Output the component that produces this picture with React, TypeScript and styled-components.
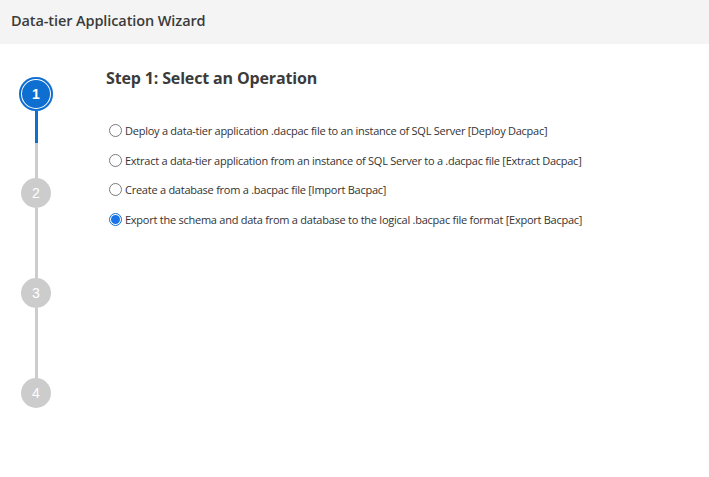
import React, { useState } from "react";
import styled, { createGlobalStyle } from "styled-components";

const Global = createGlobalStyle`
  html, body { margin: 0; padding: 0; background: #ffffff; }
  body { font-family: "Open Sans", "Noto Sans", sans-serif; color: #333333; }
  * { box-sizing: border-box; }
`;

const Page = styled.div`
  width: 709px;
  height: 477px;
  display: flex;
  flex-direction: column;
  background: #ffffff;
`;

const Header = styled.div`
  height: 44px;
  flex: none;
  background: #f4f4f4;
  display: flex;
  align-items: center;
  padding-left: 11px;
  padding-bottom: 4px;
`;

const Title = styled.div`
  font-size: 14.5px;
  font-weight: 600;
  color: #3b3b3b;
  letter-spacing: -0.1px;
`;

const Body = styled.div`
  display: flex;
  flex: 1;
`;

const Rail = styled.div`
  width: 72px;
  flex: none;
  display: flex;
  flex-direction: column;
  align-items: center;
  padding-top: 33px;
`;

const StepCircle = styled.div<{ $active?: boolean }>`
  width: ${(p) => (p.$active ? 34 : 30)}px;
  height: ${(p) => (p.$active ? 34 : 30)}px;
  flex: none;
  border-radius: 50%;
  background: ${(p) => (p.$active ? "#0f6fd1" : "#cccccc")};
  box-shadow: ${(p) => (p.$active ? "inset 0 0 0 2px #0f6fd1, inset 0 0 0 3px #ffffff" : "none")};
  color: #ffffff;
  font-family: "Liberation Sans", Arial, sans-serif;
  font-size: 14px;
  font-weight: ${(p) => (p.$active ? 700 : 400)};
  display: flex;
  align-items: center;
  justify-content: center;
`;

const Connector = styled.div<{ $length: number; $progress?: number }>`
  width: 3px;
  height: ${(p) => p.$length}px;
  flex: none;
  background: ${(p) =>
    p.$progress
      ? `linear-gradient(#0f6fd1 0, #0f6fd1 ${p.$progress}px, #cccccc ${p.$progress}px)`
      : "#cccccc"};
`;

const Content = styled.div`
  flex: 1;
  padding-left: 34px;
  padding-top: 23px;
`;

const StepTitle = styled.h2`
  margin: 0;
  font-size: 16px;
  font-weight: 700;
  color: #3b3b3b;
  letter-spacing: -0.15px;
  line-height: 22px;
`;

const Options = styled.div`
  display: flex;
  flex-direction: column;
  gap: 10.7px;
  margin-top: 32px;
`;

const Option = styled.label`
  display: flex;
  align-items: center;
  gap: 3px;
  height: 19px;
  font-size: 11px;
  color: #333333;
  cursor: pointer;
  letter-spacing: -0.25px;
`;

const Radio = styled.span<{ $checked?: boolean }>`
  width: 13px;
  height: 13px;
  flex: none;
  margin-left: 3px;
  border-radius: 50%;
  border: 1px solid ${(p) => (p.$checked ? "#0f6fd1" : "#7a7a7a")};
  background: #ffffff;
  display: flex;
  align-items: center;
  justify-content: center;
  &::after {
    content: "";
    width: 9px;
    height: 9px;
    border-radius: 50%;
    background: ${(p) => (p.$checked ? "#1a73e8" : "transparent")};
  }
`;

const options = [
  "Deploy a data-tier application .dacpac file to an instance of SQL Server [Deploy Dacpac]",
  "Extract a data-tier application from an instance of SQL Server to a .dacpac file [Extract Dacpac]",
  "Create a database from a .bacpac file [Import Bacpac]",
  "Export the schema and data from a database to the logical .bacpac file format [Export Bacpac]",
];

export default function App() {
  const [selected, setSelected] = useState(3);
  return (
    <Page>
      <Global />
      <Header>
        <Title>Data-tier Application Wizard</Title>
      </Header>
      <Body>
        <Rail>
          <StepCircle $active>1</StepCircle>
          <Connector $length={67} $progress={32} />
          <StepCircle>2</StepCircle>
          <Connector $length={70} />
          <StepCircle>3</StepCircle>
          <Connector $length={70} />
          <StepCircle>4</StepCircle>
        </Rail>
        <Content>
          <StepTitle>Step 1: Select an Operation</StepTitle>
          <Options>
            {options.map((o, i) => (
              <Option key={i} onClick={() => setSelected(i)}>
                <Radio $checked={selected === i} />
                {o}
              </Option>
            ))}
          </Options>
        </Content>
      </Body>
    </Page>
  );
}
